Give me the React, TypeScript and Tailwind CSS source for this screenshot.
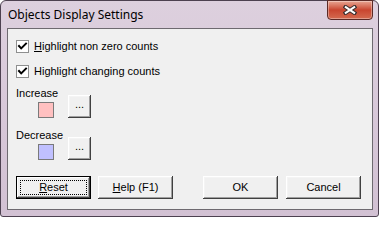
import React from "react";

const font = { fontFamily: '"Liberation Sans", Arial, sans-serif' };

function CheckBox({ label, hotkey }: { label: string; hotkey?: boolean }) {
  return (
    <div className="flex h-[13px] items-center gap-[5px]">
      <span className="flex h-[13px] w-[13px] items-center justify-center border border-[#8e8f8f] bg-white">
        <svg width="11" height="11" viewBox="0 0 11 11">
          <path d="M2 5 L4.2 7.4 L9 2.6" fill="none" stroke="#000" strokeWidth="2" strokeLinecap="square" />
        </svg>
      </span>
      <span className="text-[11px] leading-[13px] text-black">
        {hotkey ? (
          <>
            <span className="underline underline-offset-1">{label[0]}</span>
            {label.slice(1)}
          </>
        ) : (
          label
        )}
      </span>
    </div>
  );
}

function WinButton({
  children,
  className = "",
  isDefault = false,
}: {
  children: React.ReactNode;
  className?: string;
  isDefault?: boolean;
}) {
  if (isDefault) {
    return (
      <button className={`h-[23px] border border-[#000] bg-[#f0f0f0] p-0 ${className}`}>
        <span className="flex h-full w-full items-center justify-center p-[3px] shadow-[inset_-1px_-1px_#404040,inset_1px_1px_#ffffff,inset_-2px_-2px_#a0a0a0]">
          <span className="flex h-full w-full items-center justify-center border border-dotted border-black text-[11px] text-black">
            {children}
          </span>
        </span>
      </button>
    );
  }
  return (
    <button
      className={`flex h-[23px] items-center justify-center bg-[#f0f0f0] p-0 text-[11px] text-black shadow-[inset_-1px_-1px_#404040,inset_1px_1px_#ffffff,inset_-2px_-2px_#a0a0a0,inset_2px_2px_#f4f4f4] ${className}`}
    >
      {children}
    </button>
  );
}

function ColorPick({ label, color }: { label: string; color: string }) {
  return (
    <div className="flex items-end">
      <div className="flex w-[52px] flex-col">
        <div className="text-[11px] leading-[13px] text-black">{label}</div>
        <span className={`ml-[22px] mt-[2px] h-[16px] w-[16px] border border-[#7a7a7a] ${color}`} />
      </div>
      <WinButton className="w-[23px] pb-[4px]">...</WinButton>
    </div>
  );
}

export default function App() {
  return (
    <div
      className="flex h-[217px] w-[379px] flex-col rounded-t-[6px] rounded-b-[3px] border border-[#4d4150] bg-gradient-to-b from-[#ddd0de] via-[#d8c8d9] to-[#d2c1d3] pb-[6px] pl-[6px] pr-[5px]"
      style={font}
    >
      <div className="flex h-[27px] shrink-0 items-start justify-between">
        <span
          className="mt-[5px] pl-[1px] text-[12px] text-black"
          style={{ fontFamily: '"Noto Sans", "Open Sans", sans-serif' }}
        >
          Objects Display Settings
        </span>
        <div className="-mt-px flex h-[20px] w-[46px] items-center justify-center rounded-b-[4px] border border-[#5b2a26] bg-gradient-to-b from-[#e7a593] via-[#c9452f] to-[#d46a4f] shadow-[inset_0_0_0_1px_rgba(255,255,255,0.35)]">
          <svg width="14" height="10" viewBox="0 0 14 10">
            <path d="M2.5 2 L11.5 8 M11.5 2 L2.5 8" stroke="#3d3030" strokeWidth="4" strokeLinecap="square" />
            <path d="M2.8 2.2 L11.2 7.8 M11.2 2.2 L2.8 7.8" stroke="#ffffff" strokeWidth="2" strokeLinecap="square" />
          </svg>
        </div>
      </div>

      <div className="flex flex-1 flex-col border border-[#6e6a70] bg-[#f0f0f0] px-[8px] pt-[11px]">
        <CheckBox label="Highlight non zero counts" hotkey />
        <div className="mt-[12px]">
          <CheckBox label="Highlight changing counts" />
        </div>
        <div className="mt-[9px]">
          <ColorPick label="Increase" color="bg-[#ffc0c0]" />
        </div>
        <div className="mt-[11px]">
          <ColorPick label="Decrease" color="bg-[#c0c0ff]" />
        </div>
        <div className="mt-[16px] flex">
          <WinButton isDefault className="w-[75px]">
            <span>
              <span className="underline underline-offset-1">R</span>eset
            </span>
          </WinButton>
          <WinButton className="ml-[7px] w-[75px]">
            <span>
              <span className="underline underline-offset-1">H</span>elp (F1)
            </span>
          </WinButton>
          <WinButton className="ml-[30px] w-[75px]">OK</WinButton>
          <WinButton className="ml-[8px] w-[75px]">Cancel</WinButton>
        </div>
      </div>
    </div>
  );
}
